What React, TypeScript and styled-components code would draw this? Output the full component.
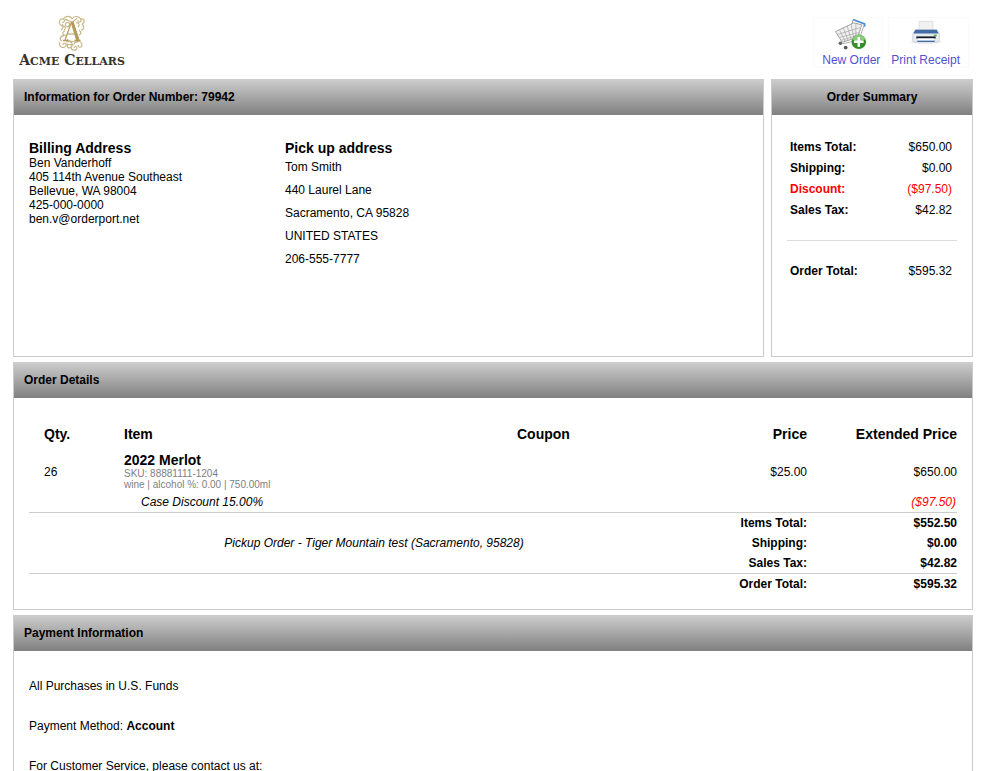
import React from "react";
import styled, { createGlobalStyle } from "styled-components";

const GlobalStyle = createGlobalStyle`
  * { box-sizing: border-box; }
  body {
    margin: 0;
    background: #fff;
    color: #000;
    font: 12px/14px "Liberation Sans", Arial, Helvetica, sans-serif;
  }
  h1, h2, h3, p, dl, dd { margin: 0; }
`;

const Page = styled.div`
  display: flex;
  flex-direction: column;
  gap: 5px;
  padding: 14px 15px 20px 13px;
`;

const TopBar = styled.header`
  display: flex;
  justify-content: space-between;
  align-items: flex-start;
  min-height: 60px;
`;

const Brand = styled.a`
  display: flex;
  flex-direction: column;
  align-items: center;
  min-width: 118px;
  color: #37322e;
  text-decoration: none;
`;

const BrandName = styled.span`
  font-family: "DejaVu Serif", "Liberation Serif", serif;
  font-size: 14px;
  font-weight: bold;
  line-height: 16px;
  white-space: nowrap;
  text-transform: uppercase;
`;

const BrandSmall = styled.span`
  font-size: 11px;
`;

const Tools = styled.nav`
  display: flex;
  gap: 5px;
  padding: 3px 4px 0 0;
`;

const Tool = styled.a`
  display: flex;
  flex-direction: column;
  align-items: center;
  gap: 2px;
  height: 51px;
  padding: 0 2px;
  border: 1px solid #fafafa;
  color: #5252d0;
  text-decoration: none;

  &:first-child { padding-left: 8px; }
  &:last-child { padding-right: 8px; }
`;

const TopRow = styled.div`
  display: grid;
  grid-template-columns: minmax(0, 1fr) 202px;
  gap: 7px;
  min-height: 278px;
`;

const Panel = styled.section`
  border: 1px solid #ccc;
`;

const PanelTitle = styled.h2<{ $center?: boolean }>`
  height: 35px;
  padding: 0 10px;
  background: linear-gradient(#ccc, #808080);
  font-size: 12px;
  line-height: 34px;
  text-align: ${(p) => (p.$center ? "center" : "left")};
`;

const Addresses = styled.div`
  display: grid;
  grid-template-columns: 256px 1fr;
  padding: 25px 15px;
`;

const SubTitle = styled.h3`
  font-size: 14px;
  line-height: 16px;
`;

const AddressLine = styled.p<{ $loose?: boolean }>`
  line-height: ${(p) => (p.$loose ? 23 : 14)}px;
`;

const Summary = styled.dl`
  padding: 22px 15px;
`;

const SummaryRow = styled.div<{ $negative?: boolean; $total?: boolean }>`
  display: flex;
  justify-content: space-between;
  padding: 0 5px 0 3px;
  line-height: 21px;
  color: ${(p) => (p.$negative ? "#f00" : "inherit")};
  ${(p) => p.$total && "margin-top: 19px; padding-top: 20px; border-top: 1px solid #ddd;"}
  dt { font-weight: bold; }
`;

const DetailsBody = styled.div`
  padding: 15px;
`;

const Table = styled.table`
  width: 100%;
  table-layout: fixed;
  border-collapse: separate;
  border-spacing: 0;
`;

const Col = styled.col<{ $w?: number }>`
  width: ${(p) => (p.$w ? p.$w + "px" : "auto")};
`;

const HeadCell = styled.th<{ $right?: boolean }>`
  padding: 13px 0 8px ${(p) => (p.$right ? 0 : 15)}px;
  font-size: 14px;
  line-height: 16px;
  text-align: ${(p) => (p.$right ? "right" : "left")};
  white-space: nowrap;
`;

const Cell = styled.td<{ $right?: boolean }>`
  padding: 4px 0 2px ${(p) => (p.$right ? 0 : 15)}px;
  text-align: ${(p) => (p.$right ? "right" : "left")};
`;

const ItemCell = styled.td`
  padding: 2px 0 2px 15px;
`;

const ItemMeta = styled.p`
  color: #808080;
  font-size: 10px;
  line-height: 11px;
`;

const NoteCell = styled.td<{ $align: string; $negative?: boolean }>`
  padding: 0 ${(p) => (p.$align === "right" ? 1 : 0)}px 0 ${(p) => (p.$align === "left" ? 32 : 0)}px;
  color: ${(p) => (p.$negative ? "#f00" : "inherit")};
  font-style: italic;
  line-height: 20px;
  text-align: ${(p) => p.$align};
`;

const TotalRow = styled.tr<{ $ruled?: boolean }>`
  > * {
    padding: 0;
    border-top: ${(p) => (p.$ruled ? "1px solid #ccc" : "0")};
    line-height: 20px;
  }
  > th, > td:last-child {
    font-weight: bold;
    text-align: right;
  }
`;

const PaymentBody = styled.div`
  display: flex;
  flex-direction: column;
  gap: 26px;
  padding: 28px 15px;
`;

const billing = ["Ben Vanderhoff", "405 114th Avenue Southeast", "Bellevue, WA 98004", "425-000-0000", "ben.v@orderport.net"];
const pickup = ["Tom Smith", "440 Laurel Lane", "Sacramento, CA 95828", "UNITED STATES", "206-555-7777"];
const summary = [
  { label: "Items Total:", value: "$650.00" },
  { label: "Shipping:", value: "$0.00" },
  { label: "Discount:", value: "($97.50)", negative: true },
  { label: "Sales Tax:", value: "$42.82" },
  { label: "Order Total:", value: "$595.32", total: true },
];

const Monogram = () => (
  <svg width="30" height="38" viewBox="0 0 30 38" fill="none" stroke="#b39b5c" strokeWidth="1" aria-hidden="true">
    <path d="M8 26 14.500 8 16 8 22 26M10.500 20H19" strokeWidth="1.200" />
    <path d="M15 8 20.500 26" strokeWidth="2.800" />
    <path d="M6 26.500h5M17.500 26.500h6" strokeWidth="1.400" />
    <g strokeWidth="1.100" opacity=".75">
      <path d="M5 12C1 10 2 4 6 5c3 1 1 4-1 3M6 5c3-4 8-3 9 0M15 5c2-4 8-3 9 1 0 3-4 3-3 0M24 5c4-1 4 4 1 5M25 10c3 2 2 6-1 6M5 12c4 0 4 3 2 4" />
      <path d="M8 17c-4 1-2 5 1 4M7 22c-4-1-5 4-2 5M3 28c-2 5 4 7 6 4 1-3-3-4-3-1M9 28c5-2 8 2 5 5-2 2-5 0-3-2M14 33c0 4 6 4 6 1 0-2-3-2-3 0M17 30c2-4 8-3 8 1 0 3-4 3-4 0M22 16c3 2 2 4 0 5" />
      <path d="M9 9c2-2 5 1 3 3s-5 0-3-3M19 9c3-1 4 2 2 4M10 25c2 3 8 3 11 3M4 16c2-1 3-4 1-6M8 5c2 2 4 1 6 3M9 30c2 1 5 0 8 1M20 4c-1 2-3 2-4 4" />
    </g>
  </svg>
);

const CartIcon = () => (
  <svg width="34" height="34" viewBox="0 0 34 34" fill="none" aria-hidden="true">
    <path d="M1 14 20 5 28 7 24 20 8 25Z" fill="#f1f1f1" stroke="#a0a0a0" />
    <path d="M3 17 26 10M5 20 25 15M7 23 24 18M5 12 11 24M9 10 14 23M13 8 17 22M17 6 20 21M22 6 22 20" stroke="#a9a9a9" strokeWidth=".8" />
    <path d="M31 6 25 23 6 27" stroke="#b0b0b0" />
    <path d="M19 1.500 31 6V9" stroke="#4b8fce" strokeWidth="1.800" />
    <path d="M19 2 18 6" stroke="#999" />
    <circle cx="6" cy="26" r="1.800" fill="#666" /><circle cx="11.500" cy="30.500" r="1.900" fill="#555" />
    <circle cx="25" cy="24.500" r="7.500" fill="#348f2b" />
    <path d="M18 22a7.500 7.500 0 0 1 14 0q-7 4-14 0" fill="#8aca7c" />
    <path d="M25 19.500v10M20 24.500h10" stroke="#fff" strokeWidth="2.600" />
  </svg>
);

const PrinterIcon = () => (
  <svg width="34" height="34" viewBox="0 0 34 34" fill="none" aria-hidden="true">
    <ellipse cx="17" cy="24.500" rx="16" ry="2" fill="#e8e8e8" />
    <path d="M10 3.500h14v10H10z" fill="#f1f1f1" stroke="#ddd" />
    <path d="M6 12h22l3 5v6l-2 2H5l-2-2v-6z" fill="#e6e9ee" stroke="#c4c8ce" strokeWidth=".6" />
    <path d="M6 12h22l2 4H4z" fill="#416ca6" />
    <path d="M7 19h20v2H7z" fill="#111b28" />
    <path d="M9 21h16l1 4H8z" fill="#fff" />
    <path d="M8 24h18" stroke="#416ca6" strokeWidth="1.400" />
    <path d="M25 18h3" stroke="#5bb030" strokeWidth="1.600" />
  </svg>
);

export default function App() {
  return (
    <>
      <GlobalStyle />
      <Page>
        <TopBar>
          <Brand href="#">
            <Monogram />
            <BrandName>A<BrandSmall>cme</BrandSmall> C<BrandSmall>ellars</BrandSmall></BrandName>
          </Brand>
          <Tools>
            <Tool href="#new"><CartIcon />New Order</Tool>
            <Tool href="#print"><PrinterIcon />Print Receipt</Tool>
          </Tools>
        </TopBar>

        <TopRow>
          <Panel>
            <PanelTitle>Information for Order Number: 79942</PanelTitle>
            <Addresses>
              <div>
                <SubTitle>Billing Address</SubTitle>
                {billing.map((line) => <AddressLine key={line}>{line}</AddressLine>)}
              </div>
              <div>
                <SubTitle>Pick up address</SubTitle>
                {pickup.map((line) => <AddressLine key={line} $loose>{line}</AddressLine>)}
              </div>
            </Addresses>
          </Panel>
          <Panel>
            <PanelTitle $center>Order Summary</PanelTitle>
            <Summary>
              {summary.map((row) => (
                <SummaryRow key={row.label} $negative={row.negative} $total={row.total}>
                  <dt>{row.label}</dt>
                  <dd>{row.value}</dd>
                </SummaryRow>
              ))}
            </Summary>
          </Panel>
        </TopRow>

        <Panel>
          <PanelTitle>Order Details</PanelTitle>
          <DetailsBody>
            <Table>
              <colgroup>
                <Col $w={80} /><Col /><Col $w={217} /><Col $w={88} /><Col $w={150} />
              </colgroup>
              <thead>
                <tr>
                  <HeadCell scope="col">Qty.</HeadCell>
                  <HeadCell scope="col">Item</HeadCell>
                  <HeadCell scope="col">Coupon</HeadCell>
                  <HeadCell scope="col" $right>Price</HeadCell>
                  <HeadCell scope="col" $right>Extended Price</HeadCell>
                </tr>
              </thead>
              <tbody>
                <tr>
                  <Cell>26</Cell>
                  <ItemCell>
                    <SubTitle>2022 Merlot</SubTitle>
                    <ItemMeta>SKU: 88881111-1204</ItemMeta>
                    <ItemMeta>wine | alcohol %: 0.00 | 750.00ml</ItemMeta>
                  </ItemCell>
                  <Cell />
                  <Cell $right>$25.00</Cell>
                  <Cell $right>$650.00</Cell>
                </tr>
                <tr>
                  <td />
                  <NoteCell $align="left" colSpan={3}>Case Discount 15.00%</NoteCell>
                  <NoteCell $align="right" $negative>($97.50)</NoteCell>
                </tr>
              </tbody>
              <tfoot>
                <TotalRow $ruled><td colSpan={3} /><th scope="row">Items Total:</th><td>$552.50</td></TotalRow>
                <TotalRow>
                  <NoteCell $align="center" colSpan={3}>Pickup Order - Tiger Mountain test (Sacramento, 95828)</NoteCell>
                  <th scope="row">Shipping:</th><td>$0.00</td>
                </TotalRow>
                <TotalRow><td colSpan={3} /><th scope="row">Sales Tax:</th><td>$42.82</td></TotalRow>
                <TotalRow $ruled><td colSpan={3} /><th scope="row">Order Total:</th><td>$595.32</td></TotalRow>
              </tfoot>
            </Table>
          </DetailsBody>
        </Panel>

        <Panel>
          <PanelTitle>Payment Information</PanelTitle>
          <PaymentBody>
            <p>All Purchases in U.S. Funds</p>
            <p>Payment Method: <strong>Account</strong></p>
            <p>For Customer Service, please contact us at:</p>
          </PaymentBody>
        </Panel>
      </Page>
    </>
  );
}
